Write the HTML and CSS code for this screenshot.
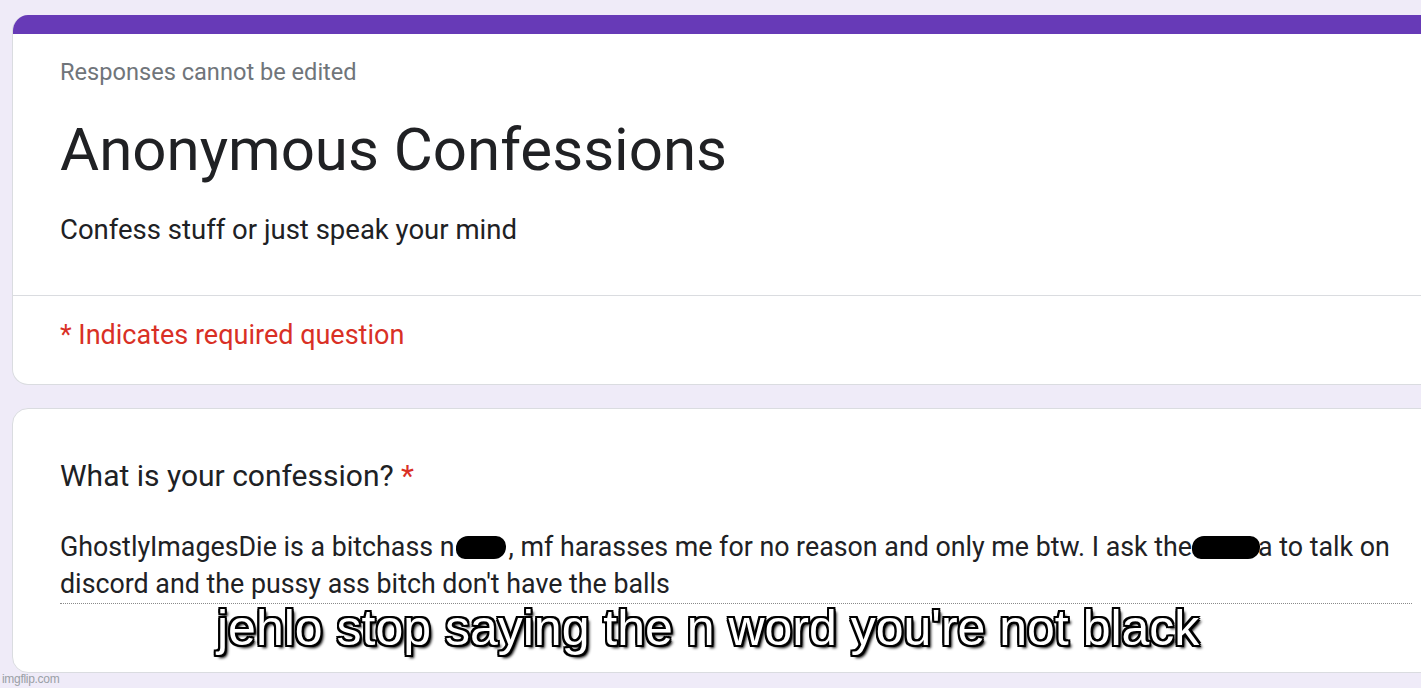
FILE: index.html
```html
<!DOCTYPE html>
<html>
<head>
<meta charset="utf-8">
<link rel="stylesheet" href="styles.css">
</head>
<body>
<div class="page">
  <section class="card head-card">
    <div class="accent"></div>
    <div class="head-main">
      <div class="note">Responses cannot be edited</div>
      <h1 class="title">Anonymous Confessions</h1>
      <div class="desc">Confess stuff or just speak your mind</div>
    </div>
    <div class="head-req">* Indicates required question</div>
  </section>
  <section class="card q-card">
    <div class="question">What is your confession? <span class="star">*</span></div>
    <div class="answer">GhostlyImagesDie is a bitchass n<span class="blob b1"></span>, mf harasses me for no reason and only me btw. I ask the<span class="blob b2"></span>a to talk on discord and the pussy ass bitch don't have the balls</div>
    <div class="caption">jehlo stop saying the n word you're not black</div>
  </section>
  <div class="wm">imgflip.com</div>
</div>
</body>
</html>
```
FILE: styles.css
```css
html, body {
  margin: 0;
  padding: 0;
  background: #efebf8;
  overflow: hidden;
  width: 1421px;
  height: 688px;
}
.page {
  position: relative;
  padding: 15px 0 0 12px;
  display: flex;
  flex-direction: column;
  gap: 23px;
  font-family: Roboto, "Liberation Sans", sans-serif;
}
.card {
  width: 1460px;
  background: #fff;
  border: 1px solid #dadce0;
  border-radius: 16px;
  box-sizing: border-box;
}
.head-card {
  border-top: none;
  overflow: hidden;
}
.accent {
  height: 19px;
  background: #673ab7;
}
.head-main {
  padding: 24px 47px 0;
  height: 262px;
  box-sizing: border-box;
  border-bottom: 1px solid #dadce0;
}
.note {
  color: #70757a;
  font-size: 23.6px;
  line-height: 28px;
}
.title {
  margin: 29px 0 0 0;
  font-weight: 400;
  font-size: 60px;
  line-height: 70px;
  color: #202124;
}
.desc {
  margin-top: 28px;
  font-size: 27.5px;
  line-height: 34px;
  color: #202124;
}
.head-req {
  padding: 21px 47px 0;
  height: 88px;
  box-sizing: border-box;
  color: #d93025;
  font-size: 27px;
  line-height: 36px;
}
.q-card {
  position: relative;
  height: 265px;
  padding: 47px 47px 0;
}
.question {
  font-size: 30px;
  line-height: 40px;
  color: #202124;
}
.star {
  color: #d93025;
}
.answer {
  margin-top: 33px;
  width: 1352px;
  font-size: 26.8px;
  line-height: 37px;
  color: #202124;
  border-bottom: 1px dotted #8a8a8a;
  padding-bottom: 0;
}
.blob {
  display: inline-block;
  height: 23px;
  background: #000;
  border-radius: 12px 10px 12px 9px;
  vertical-align: -3px;
}
.b1 {
  width: 50px;
  margin-left: 1px;
  margin-right: 3px;
}
.b2 {
  width: 68px;
  margin-right: -2px;
}
.caption {
  position: absolute;
  left: 204px;
  top: 192px;
  font-family: "Liberation Sans", Arial, sans-serif;
  font-size: 50px;
  line-height: 54px;
  color: #fff;
  white-space: nowrap;
  text-shadow: 2px 2px 0 #000, -2px -2px 0 #000, 2px -2px 0 #000, -2px 2px 0 #000, 0 2px 0 #000, 0 -2px 0 #000, 2px 0 0 #000, -2px 0 0 #000, 3px 3px 3px #000;
}
.wm {
  position: absolute;
  left: 2px;
  top: 672px;
  font-family: "Liberation Sans", Arial, sans-serif;
  font-size: 12px;
  color: #9aa0a6;
  letter-spacing: -0.3px;
}
```
